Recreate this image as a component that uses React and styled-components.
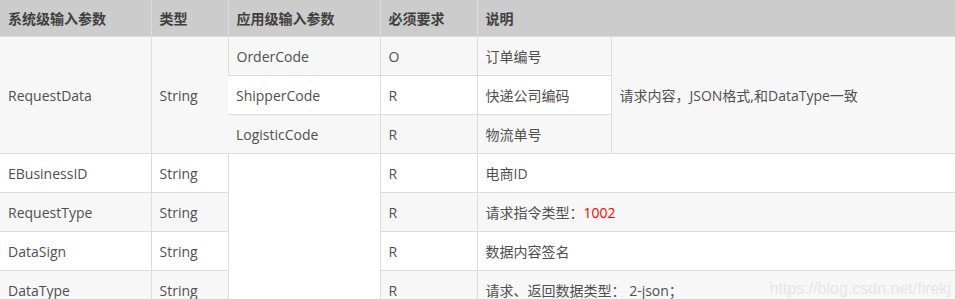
import React from "react";
import styled, { createGlobalStyle } from "styled-components";

const GlobalStyle = createGlobalStyle`
  html, body {
    margin: 0;
    padding: 0;
    background: #fff;
  }
  body {
    font-family: "Open Sans", "Noto Sans CJK SC", sans-serif;
    font-size: 14px;
    color: #4f4f4f;
  }
`;

const Wrap = styled.div`
  position: relative;
  width: 955px;
  height: 299px;
  overflow: hidden;
`;

const Table = styled.table`
  width: 955px;
  border-collapse: collapse;
  table-layout: fixed;
`;

const HeadCell = styled.th`
  height: 36px;
  padding: 0 8px;
  background: #cccccc;
  color: #3f3f3f;
  font-weight: 700;
  text-align: left;
  border-left: 1px solid #dddddd;
  border-bottom: 1px solid #dddddd;
  &:first-child {
    border-left: none;
  }
`;

const Row = styled.tr`
  background: ${(p) => (p.$shade ? "#f7f7f7" : "#ffffff")};
`;

const Cell = styled.td`
  height: 38px;
  padding: 0 8px;
  border-left: 1px solid #dddddd;
  border-bottom: 1px solid #dddddd;
  background: ${(p) => (p.$bg ? p.$bg : "inherit")};
  white-space: nowrap;
  &:first-child {
    border-left: none;
  }
`;

const Red = styled.span`
  color: #f00;
`;

const Watermark = styled.div`
  position: absolute;
  right: 4px;
  top: 280px;
  font-family: "Liberation Sans", Arial, sans-serif;
  font-size: 16px;
  color: #e6e6e6;
`;

const widths = [151, 77, 152, 97, 134, 344];

const simpleRows = [
  { name: "EBusinessID", desc: "电商ID" },
  { name: "RequestType", desc: <>请求指令类型：<Red>1002</Red></> },
  { name: "DataSign", desc: "数据内容签名" },
  { name: "DataType", desc: "请求、返回数据类型： 2-json；" },
];

export default function App() {
  return (
    <Wrap>
      <GlobalStyle />
      <Table>
        <colgroup>
          {widths.map((w, i) => (
            <col key={i} style={{ width: w }} />
          ))}
        </colgroup>
        <thead>
          <tr>
            <HeadCell>系统级输入参数</HeadCell>
            <HeadCell>类型</HeadCell>
            <HeadCell>应用级输入参数</HeadCell>
            <HeadCell>必须要求</HeadCell>
            <HeadCell colSpan={2}>说明</HeadCell>
          </tr>
        </thead>
        <tbody>
          <Row $shade>
            <Cell rowSpan={3}>RequestData</Cell>
            <Cell rowSpan={3}>String</Cell>
            <Cell>OrderCode</Cell>
            <Cell>O</Cell>
            <Cell>订单编号</Cell>
            <Cell rowSpan={3}>请求内容，JSON格式,和DataType一致</Cell>
          </Row>
          <Row>
            <Cell>ShipperCode</Cell>
            <Cell>R</Cell>
            <Cell>快递公司编码</Cell>
          </Row>
          <Row $shade>
            <Cell>LogisticCode</Cell>
            <Cell>R</Cell>
            <Cell>物流单号</Cell>
          </Row>
          {simpleRows.map((r, i) => (
            <Row key={r.name} $shade={i % 2 === 1}>
              <Cell>{r.name}</Cell>
              <Cell>String</Cell>
              {i === 0 && <Cell rowSpan={4} $bg="#ffffff" />}
              <Cell>R</Cell>
              <Cell colSpan={2}>{r.desc}</Cell>
            </Row>
          ))}
        </tbody>
      </Table>
      <Watermark>https://blog.csdn.net/firekj</Watermark>
    </Wrap>
  );
}
